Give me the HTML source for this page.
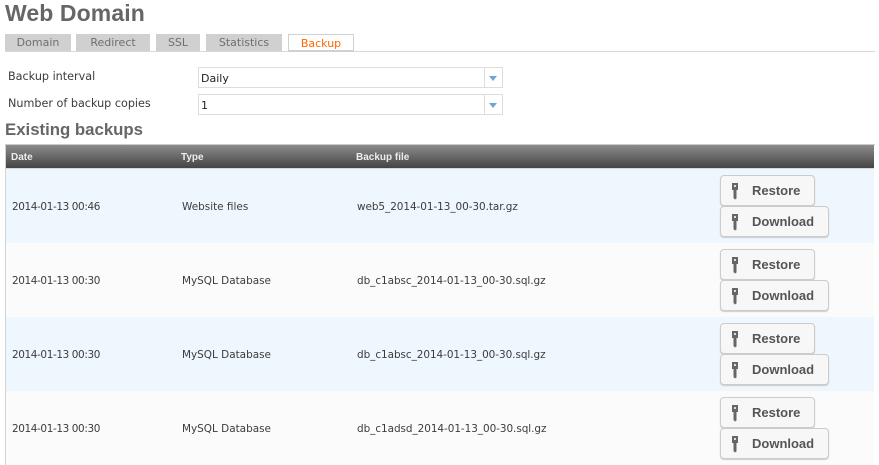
<!DOCTYPE html>
<html><head><meta charset="utf-8"><style>
html,body{margin:0;padding:0;background:#fff;width:879px;height:465px;overflow:hidden}
body{position:relative;font-family:"DejaVu Sans","Liberation Sans",sans-serif;font-size:10px;color:#444}
div,span{position:absolute;white-space:nowrap;box-sizing:border-box}
.tab{top:34px;height:17px;background:#d0d0d0;color:#6f6f6f;text-align:center;line-height:18px;font-size:11px}
.lb{left:8px;font-size:11.2px;color:#3c3c3c;line-height:14px}
.sel{left:198px;width:305px;height:21px;border:1px solid #ddd;background:#fff;color:#222;font-size:11px;line-height:21px;padding-left:2px}
.sel i{position:absolute;right:17px;top:0;bottom:0;width:1px;background:#ddd}
.sel b{position:absolute;right:5px;top:8px;width:0;height:0;border-left:4px solid transparent;border-right:4px solid transparent;border-top:5px solid #6aa6d8}
.h{top:152px;color:#eee;font-family:"Liberation Sans",sans-serif;font-size:10px;font-weight:bold;line-height:12px}
.row{left:6px;width:868px;height:74px}
.c{line-height:14px;color:#3c3c3c;font-size:10.45px}
.d{letter-spacing:-.38px}
.f{letter-spacing:-.05px}
.btn{left:720px;height:31px;border:1px solid #ccc;border-radius:4px;background:#f7f7f7;box-shadow:0 1px 1px #ccc;font-family:"Liberation Sans",sans-serif;font-weight:bold;font-size:13px;color:#555;line-height:29px;padding-left:31px}
.btn svg{position:absolute;left:11px;top:7px}
</style></head><body>
<div style="left:5px;top:-1px;font-family:'Liberation Sans',sans-serif;font-weight:bold;font-size:23px;line-height:29px;color:#666;letter-spacing:.1px">Web Domain</div>
<div class="tab" style="left:5px;width:66px">Domain</div>
<div class="tab" style="left:76px;width:74px">Redirect</div>
<div class="tab" style="left:156px;width:44px">SSL</div>
<div class="tab" style="left:206px;width:76px">Statistics</div>
<div class="tab" style="left:288px;width:66px;background:#fff;border:1px solid #d0d0d0;border-bottom:0;color:#f60;line-height:17px">Backup</div>
<div style="left:5px;top:51px;width:870px;height:1px;background:#d8d8d8"></div>
<div style="left:288px;top:50px;width:66px;height:2px;background:#d0d0d0"></div>

<div class="lb" style="top:70px">Backup interval</div>
<div class="lb" style="top:97px">Number of backup copies</div>
<div class="sel" style="top:67px">Daily<i></i><b></b></div>
<div class="sel" style="top:94px">1<i></i><b></b></div>
<div style="left:5px;top:120px;font-family:'Liberation Sans',sans-serif;font-weight:bold;font-size:16.8px;line-height:20px;color:#666">Existing backups</div>

<div style="left:5px;top:144px;width:870px;height:1px;background:#ccc"></div>
<div style="left:5px;top:145px;width:1px;height:320px;background:#d4d4d4"></div>
<div style="left:6px;top:145px;width:868px;height:23px;background:linear-gradient(#8c8c8c,#444)"></div>
<div style="left:6px;top:168px;width:868px;height:1px;background:#d8d8d8"></div>
<div class="h" style="left:11px">Date</div>
<div class="h" style="left:181px">Type</div>
<div class="h" style="left:356px">Backup file</div>

<div class="row" style="top:169px;background:#eef6fe"></div>
<div class="row" style="top:243px;background:#fbfbfb"></div>
<div class="row" style="top:317px;background:#eef6fe"></div>
<div class="row" style="top:391px;background:#fbfbfb"></div>

<div class="c d" style="left:12px;top:200px">2014-01-13 00:46</div><div class="c" style="left:182px;top:200px">Website files</div><div class="c f" style="left:357px;top:200px">web5_2014-01-13_00-30.tar.gz</div>
<div class="c d" style="left:12px;top:274px">2014-01-13 00:30</div><div class="c" style="left:182px;top:274px">MySQL Database</div><div class="c f" style="left:357px;top:274px">db_c1absc_2014-01-13_00-30.sql.gz</div>
<div class="c d" style="left:12px;top:348px">2014-01-13 00:30</div><div class="c" style="left:182px;top:348px">MySQL Database</div><div class="c f" style="left:357px;top:348px">db_c1absc_2014-01-13_00-30.sql.gz</div>
<div class="c d" style="left:12px;top:422px">2014-01-13 00:30</div><div class="c" style="left:182px;top:422px">MySQL Database</div><div class="c f" style="left:357px;top:422px">db_c1adsd_2014-01-13_00-30.sql.gz</div>

<div class="btn" style="top:175px;width:95px"><svg width="7" height="17" viewBox="0 0 7 17"><path d="M0 0h6v7H4.500v8.500L3 16.500 1.500 15V7H0z" fill="#666"/><path d="M2 2h2v2H2z" fill="#ddd"/></svg>Restore</div>
<div class="btn" style="top:206px;width:109px"><svg width="7" height="17" viewBox="0 0 7 17"><path d="M0 0h6v7H4.500v8.500L3 16.500 1.500 15V7H0z" fill="#666"/><path d="M2 2h2v2H2z" fill="#ddd"/></svg>Download</div>
<div class="btn" style="top:249px;width:95px"><svg width="7" height="17" viewBox="0 0 7 17"><path d="M0 0h6v7H4.500v8.500L3 16.500 1.500 15V7H0z" fill="#666"/><path d="M2 2h2v2H2z" fill="#ddd"/></svg>Restore</div>
<div class="btn" style="top:280px;width:109px"><svg width="7" height="17" viewBox="0 0 7 17"><path d="M0 0h6v7H4.500v8.500L3 16.500 1.500 15V7H0z" fill="#666"/><path d="M2 2h2v2H2z" fill="#ddd"/></svg>Download</div>
<div class="btn" style="top:323px;width:95px"><svg width="7" height="17" viewBox="0 0 7 17"><path d="M0 0h6v7H4.500v8.500L3 16.500 1.500 15V7H0z" fill="#666"/><path d="M2 2h2v2H2z" fill="#ddd"/></svg>Restore</div>
<div class="btn" style="top:354px;width:109px"><svg width="7" height="17" viewBox="0 0 7 17"><path d="M0 0h6v7H4.500v8.500L3 16.500 1.500 15V7H0z" fill="#666"/><path d="M2 2h2v2H2z" fill="#ddd"/></svg>Download</div>
<div class="btn" style="top:397px;width:95px"><svg width="7" height="17" viewBox="0 0 7 17"><path d="M0 0h6v7H4.500v8.500L3 16.500 1.500 15V7H0z" fill="#666"/><path d="M2 2h2v2H2z" fill="#ddd"/></svg>Restore</div>
<div class="btn" style="top:428px;width:109px"><svg width="7" height="17" viewBox="0 0 7 17"><path d="M0 0h6v7H4.500v8.500L3 16.500 1.500 15V7H0z" fill="#666"/><path d="M2 2h2v2H2z" fill="#ddd"/></svg>Download</div>
</body></html>
